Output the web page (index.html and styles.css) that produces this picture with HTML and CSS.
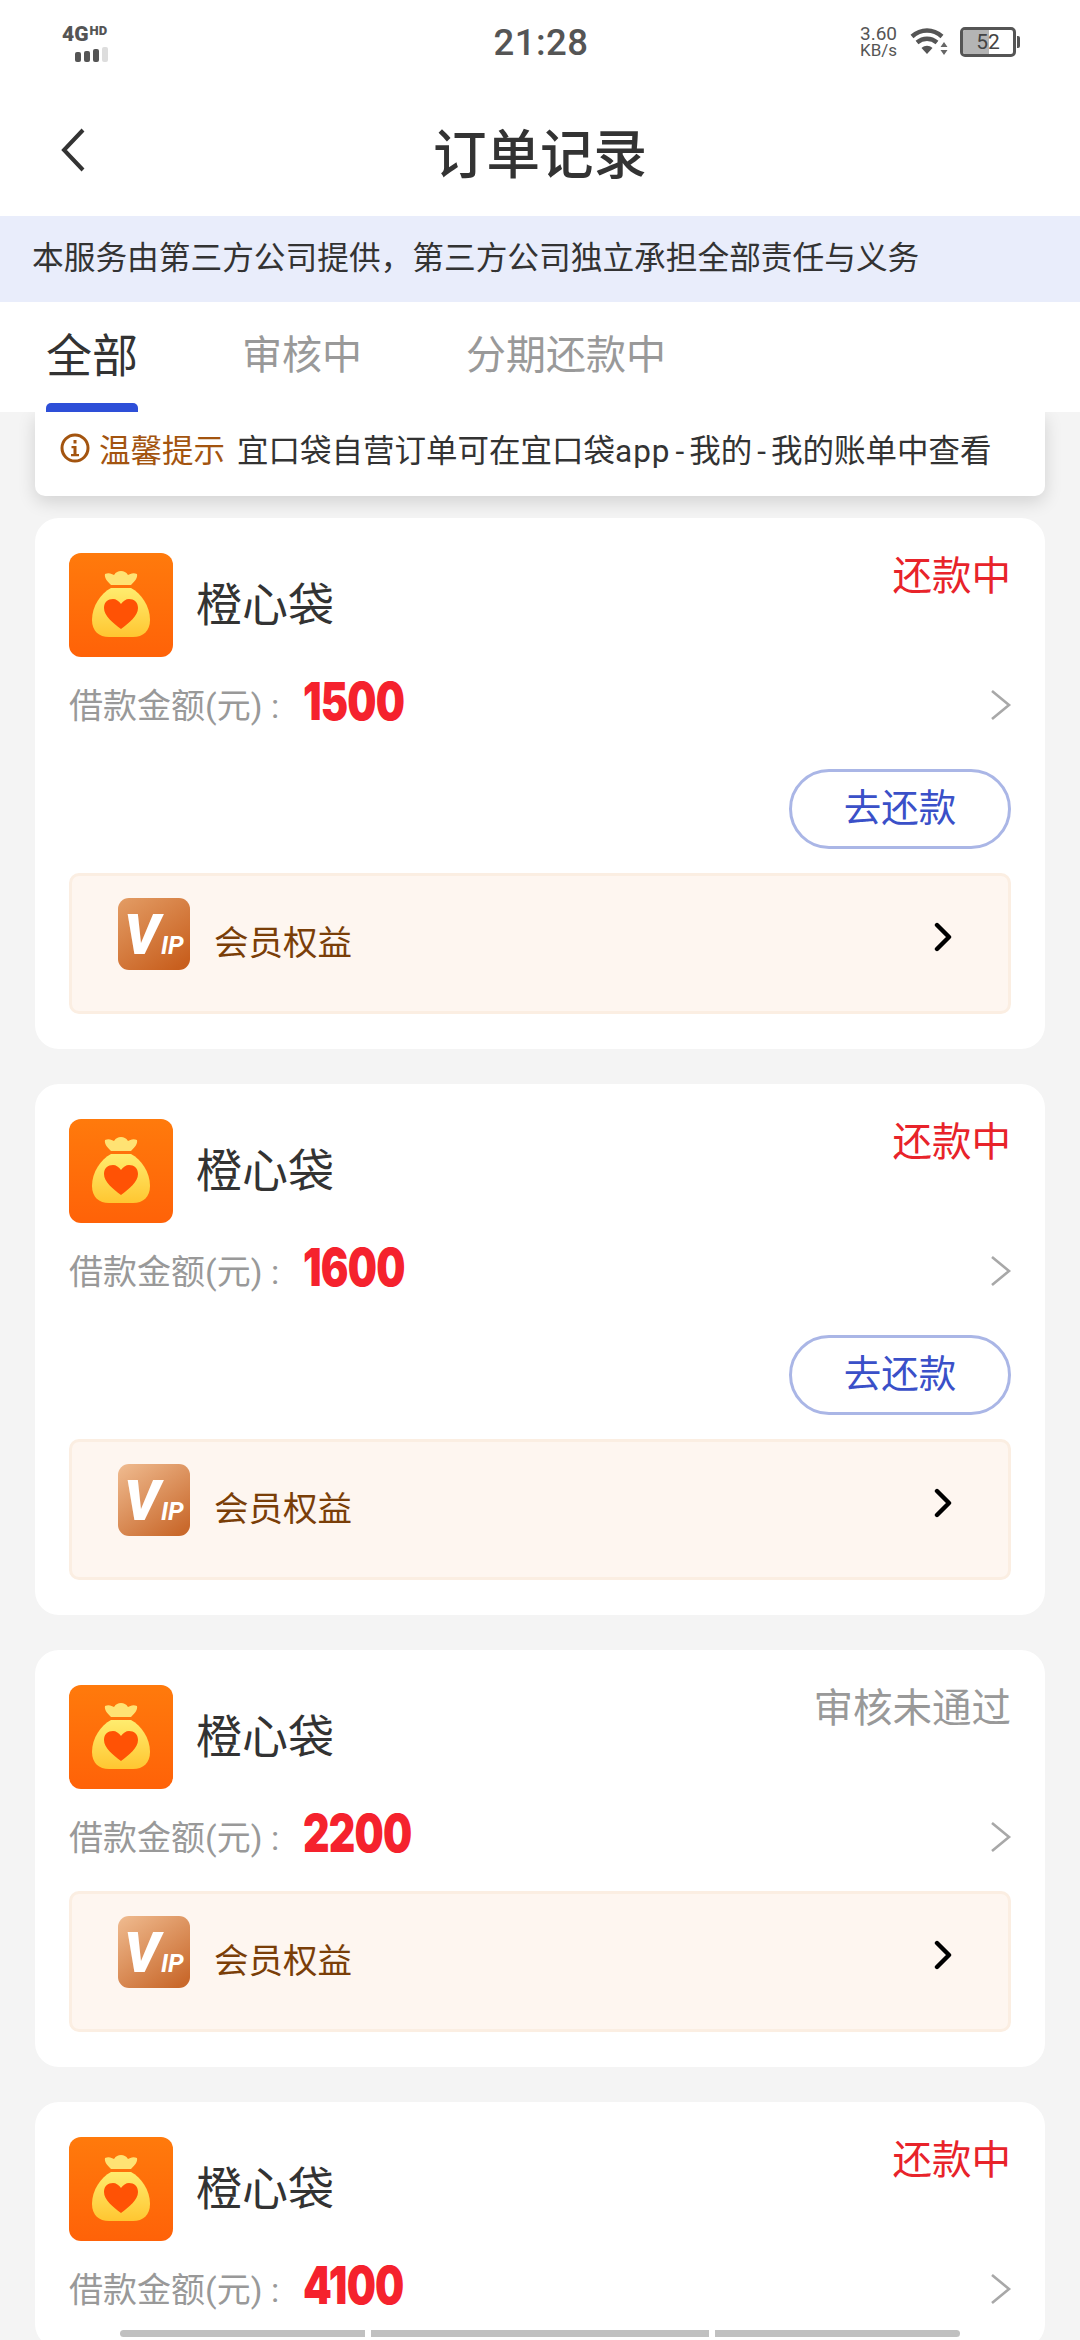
FILE: index.html
```html
<!DOCTYPE html>
<html lang="zh-CN">
<head>
    <meta charset="UTF-8">
    <meta name="viewport" content="width=device-width, initial-scale=1.0">
    <title>订单记录</title>
    <link rel="stylesheet" href="styles.css">
</head>
<body>
    <!-- shared icons -->
    <svg class="defs" aria-hidden="true">
        <defs>
            <linearGradient id="bagBg" x1="0" y1="0" x2="0" y2="1">
                <stop offset="0" stop-color="#ff7a0c"/>
                <stop offset="1" stop-color="#ff6208"/>
            </linearGradient>
            <linearGradient id="bagBody" x1="0" y1="0" x2="0" y2="1">
                <stop offset="0" stop-color="#ffec6e"/>
                <stop offset="1" stop-color="#ffc631"/>
            </linearGradient>
            <linearGradient id="vipDark" x1="0.1" y1="0" x2="0.8" y2="1">
                <stop offset="0" stop-color="#e29a62"/>
                <stop offset="1" stop-color="#c85f1e"/>
            </linearGradient>
            <linearGradient id="vipLight" x1="0.1" y1="0" x2="0.8" y2="1">
                <stop offset="0" stop-color="#eeb88c"/>
                <stop offset="1" stop-color="#c9692c"/>
            </linearGradient>
            <symbol id="bag" viewBox="0 0 104 104">
                <rect width="104" height="104" rx="12" fill="url(#bagBg)"/>
                <path d="M36 21c4-2 7 0 9 1 2-3 4-4 7-4s5 1 7 4c2-1 5-3 9-1 1 4-3 8-6 11H42c-3-3-7-7-6-11z" fill="#ffe273"/>
                <path d="M42 35h20c10 5 19 18 19 32 0 11-7 17-17 17H40c-10 0-17-6-17-17 0-14 9-27 19-32z" fill="url(#bagBody)"/>
                <path d="M52 76C44 70 35 63 35 55c0-6 4-9 9-9 3 0 6 2 8 5 2-3 5-5 8-5 5 0 9 3 9 9 0 8-9 15-17 21z" fill="#ff5205"/>
            </symbol>
            <symbol id="chevGray" viewBox="0 0 22 32">
                <path d="M2 2l17 14L2 30" fill="none" stroke="#a8a8a8" stroke-width="2.6"/>
            </symbol>
            <symbol id="chevBlack" viewBox="0 0 20 30">
                <path d="M3 3l12 12L3 27" fill="none" stroke="#000" stroke-width="4.4" stroke-linecap="round" stroke-linejoin="round"/>
            </symbol>
        </defs>
    </svg>

    <div class="page">
        <!-- status bar -->
        <div class="statusbar">
            <div class="signal">
                <div class="signal-text"><span class="sig-4g">4G</span><span class="sig-hd">HD</span></div>
                <div class="signal-bars"><i></i><i></i><i></i><i class="off"></i></div>
            </div>
            <div class="clock">21:28</div>
            <div class="status-right">
                <div class="speed"><span>3.60</span><span class="speed-unit">KB/s</span></div>
                <svg class="wifi" width="38" height="30" viewBox="0 0 38 30">
                    <path d="M2 9.5C11 1.500 23 1.500 32 9.500M7 15.500c6-5 14-5 20 0" fill="none" stroke="#555" stroke-width="4.400"/>
                    <path d="M11.500 21c3.500-3 7.500-3 11 0L17 27z" fill="#555"/>
                    <path d="M34 15l3.500 5h-7zM34 28l-3.500-5h7z" fill="#666"/>
                </svg>
                <div class="battery">
                    <div class="battery-fill"></div>
                    <span class="battery-num">52</span>
                </div>
                <div class="battery-cap"></div>
            </div>
        </div>

        <!-- nav -->
        <div class="nav">
            <svg class="nav-back" width="26" height="44" viewBox="0 0 26 44">
                <path d="M23 2L4 22l19 20" fill="none" stroke="#333" stroke-width="4"/>
            </svg>
            <h1 class="nav-title">订单记录</h1>
        </div>

        <div class="notice">本服务由第三方公司提供，第三方公司独立承担全部责任与义务</div>

        <div class="tabs">
            <div class="tab tab-active">全部</div>
            <div class="tab">审核中</div>
            <div class="tab">分期还款中</div>
        </div>

        <div class="list">
            <div class="hint">
                <svg class="hint-icon" width="30" height="32" viewBox="0 0 30 32">
                    <circle cx="15" cy="16" r="13" fill="none" stroke="#a3540f" stroke-width="3"/>
                    <rect x="13.500" y="8" width="3" height="3.500" fill="#a3540f"/>
                    <path d="M11.500 14h5v8h2.500v2.200h-8V22h2.500v-5.800h-2z" fill="#a3540f"/>
                </svg>
                <span class="hint-label">温馨提示</span>
                <span class="hint-text">宜口袋自营订单可在宜口袋<span class="hint-app">app</span><span class="hint-dash">-</span>我的<span class="hint-dash">-</span>我的账单中查看</span>
            </div>

            <!-- order 1 -->
            <div class="card">
                <div class="card-head">
                    <svg class="bag"><use href="#bag"/></svg>
                    <div class="card-name">橙心袋</div>
                    <div class="card-status">还款中</div>
                </div>
                <div class="amount-row">
                    <span class="amount-label">借款金额(元) :</span>
                    <span class="amount">1500</span>
                    <svg class="chev-gray"><use href="#chevGray"/></svg>
                </div>
                <div class="card-action"><div class="pay-btn">去还款</div></div>
                <div class="vip">
                    <svg class="vip-icon" viewBox="0 0 72 72">
                        <rect width="72" height="72" rx="11" fill="url(#vipDark)"/>
                        <text class="vip-v" x="6" y="56">V</text>
                        <text class="vip-ip" x="43" y="56">IP</text>
                    </svg>
                    <span class="vip-text">会员权益</span>
                    <svg class="chev-black"><use href="#chevBlack"/></svg>
                </div>
            </div>

            <!-- order 2 -->
            <div class="card">
                <div class="card-head">
                    <svg class="bag"><use href="#bag"/></svg>
                    <div class="card-name">橙心袋</div>
                    <div class="card-status">还款中</div>
                </div>
                <div class="amount-row">
                    <span class="amount-label">借款金额(元) :</span>
                    <span class="amount">1600</span>
                    <svg class="chev-gray"><use href="#chevGray"/></svg>
                </div>
                <div class="card-action"><div class="pay-btn">去还款</div></div>
                <div class="vip">
                    <svg class="vip-icon" viewBox="0 0 72 72">
                        <rect width="72" height="72" rx="11" fill="url(#vipLight)"/>
                        <text class="vip-v" x="6" y="56">V</text>
                        <text class="vip-ip" x="43" y="56">IP</text>
                    </svg>
                    <span class="vip-text">会员权益</span>
                    <svg class="chev-black"><use href="#chevBlack"/></svg>
                </div>
            </div>

            <!-- order 3 -->
            <div class="card">
                <div class="card-head">
                    <svg class="bag"><use href="#bag"/></svg>
                    <div class="card-name">橙心袋</div>
                    <div class="card-status card-status-gray">审核未通过</div>
                </div>
                <div class="amount-row">
                    <span class="amount-label">借款金额(元) :</span>
                    <span class="amount">2200</span>
                    <svg class="chev-gray"><use href="#chevGray"/></svg>
                </div>
                <div class="vip vip-tight">
                    <svg class="vip-icon" viewBox="0 0 72 72">
                        <rect width="72" height="72" rx="11" fill="url(#vipLight)"/>
                        <text class="vip-v" x="6" y="56">V</text>
                        <text class="vip-ip" x="43" y="56">IP</text>
                    </svg>
                    <span class="vip-text">会员权益</span>
                    <svg class="chev-black"><use href="#chevBlack"/></svg>
                </div>
            </div>

            <!-- order 4 -->
            <div class="card">
                <div class="card-head">
                    <svg class="bag"><use href="#bag"/></svg>
                    <div class="card-name">橙心袋</div>
                    <div class="card-status">还款中</div>
                </div>
                <div class="amount-row">
                    <span class="amount-label">借款金额(元) :</span>
                    <span class="amount">4100</span>
                    <svg class="chev-gray"><use href="#chevGray"/></svg>
                </div>
            </div>
        </div>

        <div class="scrollbar"><i class="seg"></i><i class="seg seg-mid"></i><i class="seg"></i></div>
    </div>
</body>
</html>
```

FILE: styles.css
```css
body {
    margin: 0;
    font-family: Roboto, "Noto Sans CJK SC", sans-serif;
    background-color: #f4f4f4;
    color: #333;
}
.defs {
    display: block;
    width: 0;
    height: 0;
}
.page {
    position: relative;
    width: 1080px;
    height: 2340px;
    overflow: hidden;
    background-color: #f4f4f4;
}

/* status bar */
.statusbar {
    display: flex;
    align-items: center;
    height: 84px;
    padding: 0 60px 0 62px;
    background-color: #fff;
    position: relative;
}
.signal {
    flex: 1;
    color: #555;
}
.signal-text {
    display: flex;
    align-items: flex-start;
    height: 22px;
    line-height: 22px;
    font-weight: 900;
}
.sig-4g {
    font-size: 21px;
}
.sig-hd {
    font-size: 13px;
    line-height: 16px;
    margin-left: 1px;
}
.signal-bars {
    display: flex;
    align-items: flex-end;
    gap: 3px;
    margin: 2px 0 0 13px;
    height: 15px;
}
.signal-bars i {
    width: 6px;
    height: 10px;
    border-radius: 2px;
    background-color: #555;
}
.signal-bars i:nth-child(2) {
    height: 11px;
}
.signal-bars i:nth-child(3) {
    height: 13px;
}
.signal-bars i.off {
    height: 15px;
    background-color: #ddd;
}
.clock {
    font-size: 36.500px;
    font-weight: 500;
    color: #555;
    letter-spacing: 0.5px;
}
.status-right {
    flex: 1;
    display: flex;
    align-items: center;
    justify-content: flex-end;
}
.speed {
    display: flex;
    flex-direction: column;
    align-items: center;
    font-size: 19px;
    line-height: 17px;
    color: #555;
    margin-right: 13px;
}
.speed-unit {
    font-size: 17px;
}
.battery {
    position: relative;
    width: 56px;
    height: 30px;
    margin-left: 12px;
    box-sizing: border-box;
    border: 3px solid #555;
    border-radius: 5px;
    overflow: hidden;
}
.battery-fill {
    width: 26px;
    height: 100%;
    background-color: #b4b4b4;
}
.battery-num {
    position: absolute;
    left: 0;
    right: 0;
    top: -1px;
    text-align: center;
    font-size: 21px;
    line-height: 26px;
    color: #444;
}
.battery-cap {
    width: 3px;
    height: 12px;
    margin-left: 1px;
    border-radius: 0 2px 2px 0;
    background-color: #555;
}

/* nav */
.nav {
    display: flex;
    align-items: center;
    justify-content: center;
    position: relative;
    height: 132px;
    background-color: #fff;
}
.nav-back {
    position: absolute;
    left: 60px;
    top: 44px;
}
.nav-title {
    margin: 0;
    font-size: 53.500px;
    font-weight: 500;
    color: #333;
}

.notice {
    height: 86px;
    line-height: 86px;
    padding-left: 32px;
    font-size: 31.700px;
    color: #333;
    background-color: #e9edfb;
}

/* tabs */
.tabs {
    display: flex;
    height: 110px;
    padding-left: 46px;
    background-color: #fff;
    position: relative;
}
.tab {
    margin-right: 104px;
    padding-top: 24px;
    font-size: 40px;
    line-height: 60px;
    color: #999;
}
.tab-active {
    font-size: 46px;
    color: #333;
}
.tab-active::after {
    content: "";
    display: block;
    width: 92px;
    height: 9px;
    margin-top: 17px;
    border-radius: 5px 5px 0 0;
    background-color: #2e4fd8;
}

/* list */
.list {
    padding: 0 35px;
}
.hint {
    display: flex;
    align-items: center;
    height: 84px;
    padding: 0 0 12px 25px;
    box-sizing: border-box;
    font-size: 31.500px;
    background-color: #fff;
    border-radius: 0 0 10px 10px;
    box-shadow: 0 6px 18px rgba(0, 0, 0, 0.14);
}
.hint-icon {
    margin: 0 9px 0 0;
    flex-shrink: 0;
}
.hint-label {
    color: #a3540f;
    margin-right: 12px;
}
.hint-text {
    color: #333;
    white-space: nowrap;
}
.hint-app {
    letter-spacing: 1px;
}
.hint-dash {
    padding: 0 5px;
}
.card {
    margin-top: 35px;
    padding: 35px 34px;
    background-color: #fff;
    border-radius: 24px;
}
.hint + .card {
    margin-top: 22px;
}
.card-head {
    display: flex;
    align-items: center;
}
.bag {
    width: 104px;
    height: 104px;
    margin-right: 23px;
}
.card-name {
    margin-bottom: 8px;
    font-size: 46px;
    color: #333;
}
.card-status {
    align-self: flex-start;
    margin-top: 2px;
    margin-left: auto;
    font-size: 39.500px;
    line-height: 44px;
    color: #e8232a;
}
.card-status-gray {
    color: #999;
}
.amount-row {
    display: flex;
    align-items: center;
    height: 48px;
    margin-top: 24px;
}
.amount-label {
    flex-shrink: 0;
    width: 234px;
    font-size: 34px;
    color: #999;
    position: relative;
    top: -2px;
}
.amount {
    font-family: Inter, Roboto, sans-serif;
    font-size: 52px;
    font-weight: 900;
    line-height: 48px;
    letter-spacing: -1px;
    color: #f5222d;
    transform: scaleX(0.79);
    transform-origin: left center;
    position: relative;
    top: -3px;
}
.chev-gray {
    width: 22px;
    height: 32px;
    margin: 0 -1px 0 auto;
}
.card-action {
    display: flex;
    justify-content: flex-end;
    margin-top: 40px;
}
.pay-btn {
    width: 222px;
    height: 80px;
    box-sizing: border-box;
    border: 3px solid #aab6e6;
    border-radius: 40px;
    text-align: center;
    line-height: 72px;
    font-size: 37.500px;
    color: #3a50c8;
}
.vip {
    display: flex;
    align-items: center;
    height: 141px;
    margin-top: 24px;
    padding: 0 54px 0 46px;
    box-sizing: border-box;
    background-color: #fef6f0;
    border: 3px solid #fbeee2;
    border-radius: 10px;
}
.vip-tight {
    margin-top: 30px;
}
.vip-icon {
    width: 72px;
    height: 72px;
    margin: 0 24px 20px 0;
}
.vip-v {
    font-family: Roboto, sans-serif;
    font-size: 56px;
    font-weight: 900;
    font-style: italic;
    fill: #fff;
}
.vip-ip {
    font-family: Roboto, sans-serif;
    font-size: 25px;
    font-weight: 700;
    font-style: italic;
    fill: #fff;
}
.vip-text {
    margin-bottom: 8px;
    font-size: 34.500px;
    color: #7a3e08;
}
.chev-black {
    width: 20px;
    height: 30px;
    margin: 0 0 14px auto;
}

/* bottom scroll indicator */
.scrollbar {
    position: absolute;
    left: 120px;
    bottom: 3px;
    display: flex;
    gap: 6px;
}
.seg {
    width: 245px;
    height: 7px;
    background-color: #c0c0c0;
}
.seg:first-child {
    border-radius: 4px 0 0 4px;
}
.seg:last-child {
    border-radius: 0 4px 4px 0;
}
.seg-mid {
    width: 338px;
}
```
